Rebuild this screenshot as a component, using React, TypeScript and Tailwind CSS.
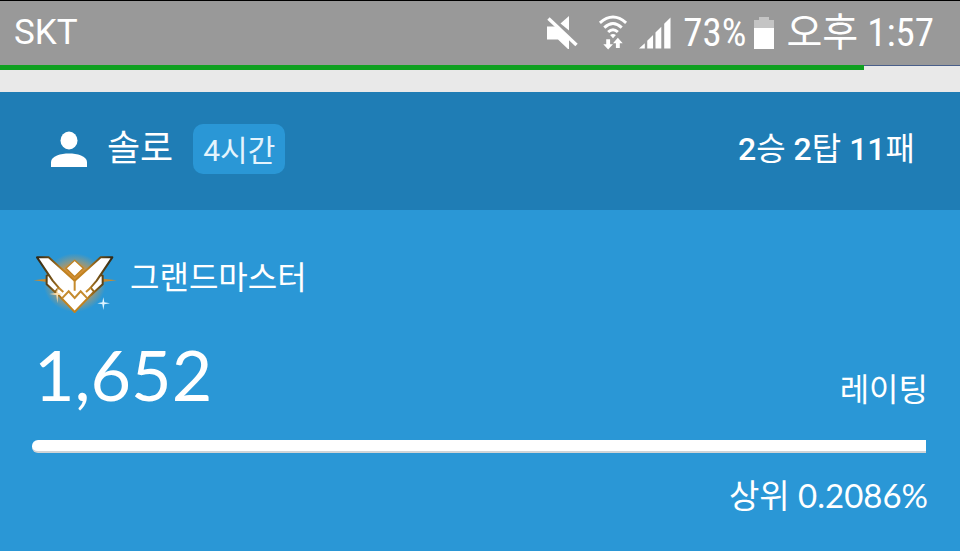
import React from 'react';

const sans = "font-['Roboto','Noto_Sans_CJK_KR',sans-serif]";
const condensed = "font-['Roboto_Condensed','Liberation_Sans_Narrow','Roboto','Noto_Sans_CJK_KR',sans-serif]";

function MuteIcon() {
  return (
    <svg className="h-8 w-8 shrink-0 overflow-visible" viewBox="0 0 32 32" fill="#fff" aria-label="Muted">
      <path d="M0 9.500H9L22 20V32H21L11 22.500H0Z" />
      <path d="M22 -1V13.500L13.500 6.500Z" />
      <path d="M1.500 1.500L29.500 28" stroke="#fff" strokeWidth="3.400" />
    </svg>
  );
}

function WifiIcon() {
  return (
    <svg className="h-8 w-7 shrink-0 overflow-visible" viewBox="0 0 28 33" fill="none" stroke="#fff" aria-label="Wi-Fi">
      <path d="M.5 6Q14 -6 27.500 6M5 11Q14 2.500 23 11M9 15.500Q14 10.500 19 15.500" strokeWidth="3" />
      <path d="M11 18.500Q14 16.500 17 18.500L14 22Z" fill="#fff" stroke="none" />
      <path d="M7 23h4v5h3l-5 5.500l-5-5.500h3ZM17 32v-5h-3l5-5.500l5 5.500h-3v5Z" fill="#fff" stroke="none" />
    </svg>
  );
}

function SignalIcon() {
  return (
    <svg className="h-8 w-8 shrink-0" viewBox="0 0 33 32" fill="#fff" aria-label="Signal">
      <path d="M0 32L6 26.500V32ZM8.500 24L14.500 18V32H8.500ZM17 15.500L23 9.500V32H17ZM26 6.500L32.500 0V32H26Z" />
    </svg>
  );
}

function BatteryIcon() {
  return (
    <svg className="h-8 w-5 shrink-0" viewBox="0 0 20 32" aria-label="Battery">
      <path d="M0 3H5V0H15V3H20V11H0Z" fill="#c4c4c4" />
      <path d="M0 11H20V32H0Z" fill="#fff" />
    </svg>
  );
}

function PersonIcon() {
  return (
    <svg className="h-9 w-9 shrink-0" viewBox="0 0 36 36" fill="#fff">
      <ellipse cx="18" cy="9.500" rx="8.500" ry="9" />
      <path d="M0 36V31C0 25 10 22.500 18 22.500S36 25 36 31V36Z" />
    </svg>
  );
}

function GrandmasterEmblem() {
  return (
    <svg className="h-[68px] w-[86px] shrink-0" viewBox="0 0 258 204">
      <defs>
        <radialGradient id="glow">
          <stop offset="0.500" stopColor="#dc8f2e" stopOpacity="0.950" />
          <stop offset="0.750" stopColor="#c99a58" stopOpacity="0.500" />
          <stop offset="1" stopColor="#c99a58" stopOpacity="0" />
        </radialGradient>
        <linearGradient id="edge" gradientUnits="userSpaceOnUse" x1="12" x2="246" y1="0" y2="0">
          <stop offset="0" stopColor="#2b2618" />
          <stop offset="0.150" stopColor="#5d4315" />
          <stop offset="0.350" stopColor="#c08220" />
          <stop offset="0.650" stopColor="#c08220" />
          <stop offset="0.850" stopColor="#5d4315" />
          <stop offset="1" stopColor="#2b2618" />
        </linearGradient>
      </defs>
      <ellipse cx="128" cy="98" rx="94" ry="88" fill="url(#glow)" />
      <path d="M4 91L46 86V96ZM254 91L212 86V96Z" fill="#c48b35" />
      <g fill="#fff" stroke="url(#edge)" strokeWidth="6" strokeLinejoin="round">
        <path d="M58 73L44 77V103L78 134L92 116ZM198 73L212 77V103L178 134L164 116Z" />
        <path d="M15 22H50L128 92L206 22H241L194 92L176 113L186 125L128 186L70 125L80 113L62 92Z" />
      </g>
      <path d="M128 31L154 55L128 80L102 55Z" fill="#fff" stroke="#c08220" strokeWidth="4" />
      <path
        d="M128 92V122M80 113L94 126M176 113L162 126M90 145L110 124L128 144L146 124L166 145"
        fill="none"
        stroke="#c58b2e"
        strokeWidth="6"
      />
      <path d="M214 142L217 157L234 160L217 163L214 180L211 163L196 160L211 157Z" fill="#dff4ff" />
      <path d="M76 112L78 129L92 132L78 135L76 160L73 135L52 132L73 129Z" fill="#ffe0ae" />
    </svg>
  );
}

function StatusBar() {
  return (
    <header className="flex h-[65px] items-center justify-between border-t border-black bg-[#999] pr-[26px] pl-3.5 text-white">
      <span className={`text-[35px] ${sans}`}>SKT</span>
      <div className={`flex items-center text-[39px] ${condensed}`}>
        <MuteIcon />
        <div className="ml-5 flex items-center gap-3">
          <WifiIcon />
          <SignalIcon />
          <span>73%</span>
        </div>
        <div className="ml-2 flex items-center gap-3">
          <BatteryIcon />
          <span>오후 1:57</span>
        </div>
      </div>
    </header>
  );
}

function App() {
  return (
    <div className={`min-h-screen bg-white text-white ${sans}`}>
      <StatusBar />

      <div className="h-[27px] border-t border-[#4a5f8a] bg-[#e9e9e9]">
        <div className="-mt-px h-[5px] w-[90%] bg-[#0fa020]" />
      </div>

      <section>
        <div className="flex h-[118px] items-center justify-between bg-[#1f7db5] pr-[45px] pb-1 pl-[51px]">
          <div className="flex items-center">
            <PersonIcon />
            <h2 className="ml-5 text-[36px]">솔로</h2>
            <span className="ml-5 flex h-[50px] items-center rounded-[10px] bg-[#2a97d6] px-2.5 pt-0.5 text-[30px] text-[#e4f4fd]">
              4시간
            </span>
          </div>
          <p className="text-[32px]">
            <b className="font-medium">2</b>승 <b className="font-medium">2</b>탑 <b className="font-medium">11</b>패
          </p>
        </div>

        <div className="bg-[#2a97d6] px-8 pt-10 pb-8">
          <div className="flex items-start gap-3">
            <GrandmasterEmblem />
            <h3 className="text-[32px] leading-[56px]">그랜드마스터</h3>
          </div>

          <div className="mt-3.5 flex items-end justify-between">
            <strong className="pl-0.5 font-['Lato',sans-serif] text-[70px] leading-[84px] font-normal">1,652</strong>
            <span className="text-[32px] leading-[52px]">레이팅</span>
          </div>

          <div className="mt-6 mr-0.5 h-[13px] rounded-l-md border-b-2 border-[#cfd4d7] bg-white" />

          <p className="mt-[18px] text-right font-['Lato','Noto_Sans_CJK_KR',sans-serif] text-[33px] leading-[48px]">
            상위 0.2086%
          </p>
        </div>
      </section>
    </div>
  );
}

export default App;
